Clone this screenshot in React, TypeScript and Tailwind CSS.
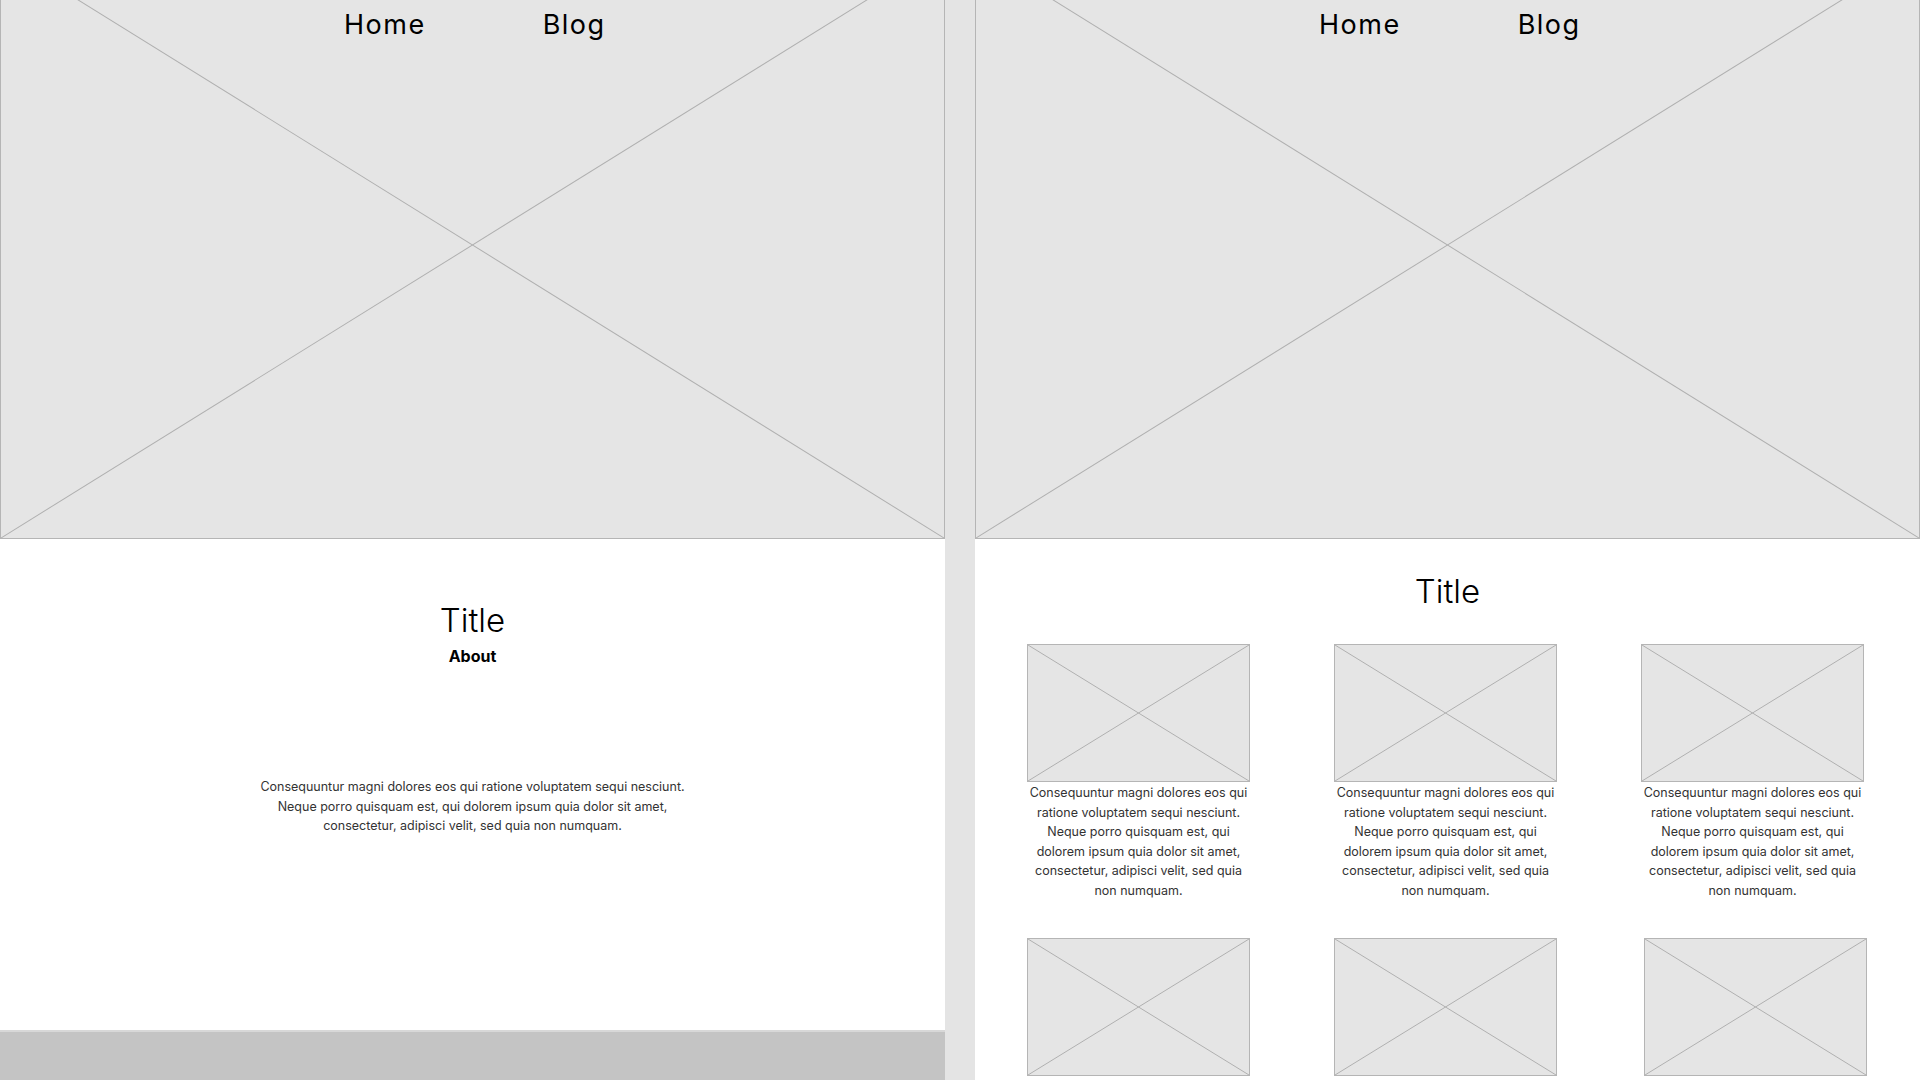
const FONT = { fontFamily: "Inter, 'Noto Sans', sans-serif" };

const TEXT =
  "Consequuntur magni dolores eos qui ratione voluptatem sequi nesciunt. Neque porro quisquam est, qui dolorem ipsum quia dolor sit amet, consectetur, adipisci velit, sed quia non numquam.";

function Placeholder({ className }: { className: string }) {
  return (
    <div className={"relative bg-[#e5e5e5] border border-[#b5b5b5] " + className}>
      <svg
        className="absolute inset-0 w-full h-full"
        viewBox="0 0 100 100"
        preserveAspectRatio="none"
      >
        <line x1="0" y1="0" x2="100" y2="100" stroke="#b0b0b0" strokeWidth="1" vectorEffect="non-scaling-stroke" />
        <line x1="100" y1="0" x2="0" y2="100" stroke="#b0b0b0" strokeWidth="1" vectorEffect="non-scaling-stroke" />
      </svg>
    </div>
  );
}

// hero image is cropped at the top, so its X meets above the middle
function Hero() {
  return (
    <div className="relative h-[539px] shrink-0 overflow-hidden">
      <Placeholder className="w-full h-[588px] -mt-[49px]" />
      <nav className="absolute top-[8px] left-[344px] flex gap-[117px] text-[27px] leading-[34px] tracking-[1.5px] text-black">
        <a>Home</a>
        <a>Blog</a>
      </nav>
    </div>
  );
}

function Card({ shift, caption = true }: { shift?: boolean; caption?: boolean }) {
  return (
    <div className={"w-[223px] flex flex-col items-center " + (shift ? "ml-[3px]" : "")}>
      <Placeholder className="w-[223px] h-[138px]" />
      {caption && (
        <p className="mt-[1px] text-[12.5px] leading-[19.6px] text-[#333] text-center w-[222px]">
          {TEXT}
        </p>
      )}
    </div>
  );
}

export default function App() {
  return (
    <div className="flex w-[1920px] h-[1080px] overflow-hidden bg-[#e4e4e4]" style={FONT}>
      {/* about page */}
      <div className="w-[945px] shrink-0 bg-white flex flex-col">
        <Hero />
        <section className="flex-1 flex flex-col items-center">
          <h1 className="mt-[61px] text-[33px] font-light leading-[40px] text-black">Title</h1>
          <h2 className="mt-[6px] text-[16px] font-bold leading-[20px] text-black">About</h2>
          <p className="mt-[111px] w-[440px] text-[12.5px] leading-[19.6px] text-[#333] text-center">
            {TEXT}
          </p>
        </section>
        <footer className="h-[50px] shrink-0 bg-[#c4c4c4] border-t-2 border-[#d8d8d8]" />
      </div>

      <div className="w-[30px] shrink-0" />

      {/* blog page */}
      <div className="w-[945px] shrink-0 bg-white flex flex-col">
        <Hero />
        <h1 className="mt-[32px] text-[33px] font-light leading-[40px] text-black text-center">Title</h1>
        <div className="mt-[33px] pl-[52px] grid grid-cols-[223px_223px_223px] gap-x-[84px] gap-y-[37px]">
          <Card />
          <Card />
          <Card />
          <Card caption={false} />
          <Card caption={false} />
          <Card caption={false} shift />
        </div>
      </div>
    </div>
  );
}
